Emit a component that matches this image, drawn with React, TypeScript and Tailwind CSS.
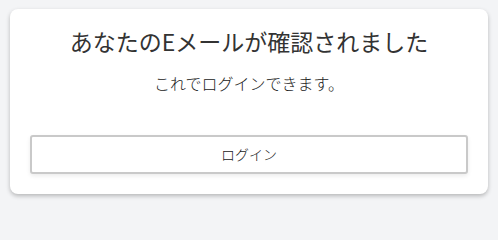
export default function App() {
  return (
    <div
      className="min-h-screen bg-[#f3f4f6] px-[10px] pt-[9px]"
      style={{ fontFamily: '"Noto Sans CJK JP", "Noto Sans", sans-serif' }}
    >
      <div className="rounded-lg bg-white px-5 pt-[14px] pb-5 shadow-[0_2px_4px_rgba(0,0,0,0.25)]">
        <h1 className="text-center text-[23px] leading-[36px] text-[#333333]">
          あなたのEメールが確認されました
        </h1>
        <p className="mt-[12px] text-center text-[16px] font-light leading-6 text-[#222222]">
          これでログインできます。
        </p>
        <button className="mt-[40px] flex h-[39px] w-full items-center justify-center rounded-[3px] border-2 border-[#c9c9c9] bg-white text-[14px] font-light text-[#222222] shadow-[0_2px_4px_rgba(0,0,0,0.08)]">
          ログイン
        </button>
      </div>
    </div>
  );
}
